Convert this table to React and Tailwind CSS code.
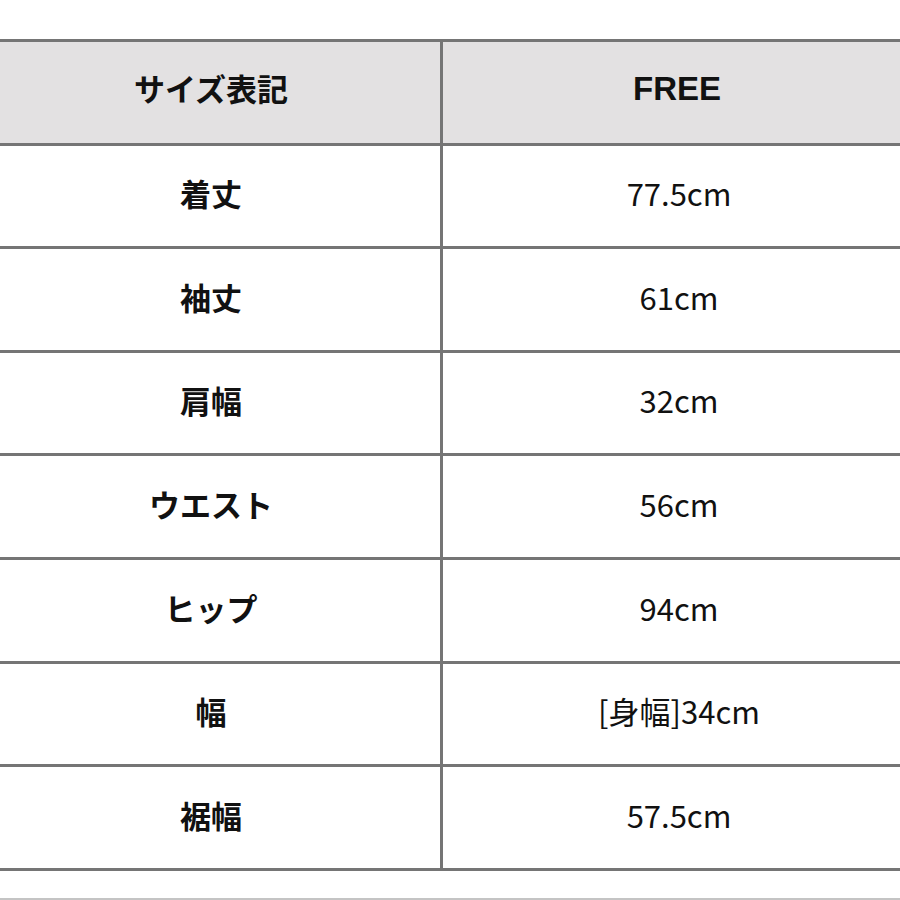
const rows = [
  ['着丈', '77.5cm'],
  ['袖丈', '61cm'],
  ['肩幅', '32cm'],
  ['ウエスト', '56cm'],
  ['ヒップ', '94cm'],
  ['幅', '[身幅]34cm'],
  ['裾幅', '57.5cm'],
];

export default function App() {
  return (
    <div
      className="w-[900px] h-[900px] overflow-hidden bg-white text-[#111]"
      style={{ fontFamily: '"Noto Sans CJK JP", "Noto Sans", sans-serif' }}
    >
      <div className="pt-[39px] ml-[-18px] w-[933px]">
        <div className="border-t-[3px] border-[#757575]">
          {/* header */}
          <div className="flex h-[103.6px] border-b-[3px] border-[#757575] bg-[#e3e1e2]">
            <div className="w-[458px] flex items-center justify-center pb-[8px] text-[31px] font-bold">
              サイズ表記
            </div>
            <div className="w-[3px] bg-[#757575]" />
            <div className="flex-1 flex items-center justify-center pb-[8px] pr-[4px] text-[33px] font-bold font-['Liberation_Sans',sans-serif]">
              FREE
            </div>
          </div>
          {rows.map(([label, value]) => (
            <div key={label} className="flex h-[103.6px] border-b-[3px] border-[#757575]">
              <div className="w-[458px] flex items-center justify-center pb-[5px] text-[31px] font-bold">
                {label}
              </div>
              <div className="w-[3px] bg-[#757575]" />
              <div className="flex-1 flex items-center justify-center pb-[5px] text-[31px]">
                {value}
              </div>
            </div>
          ))}
        </div>
        <div className="mt-[27px] border-t-[2px] border-[#c4c4c4]" />
      </div>
    </div>
  );
}
